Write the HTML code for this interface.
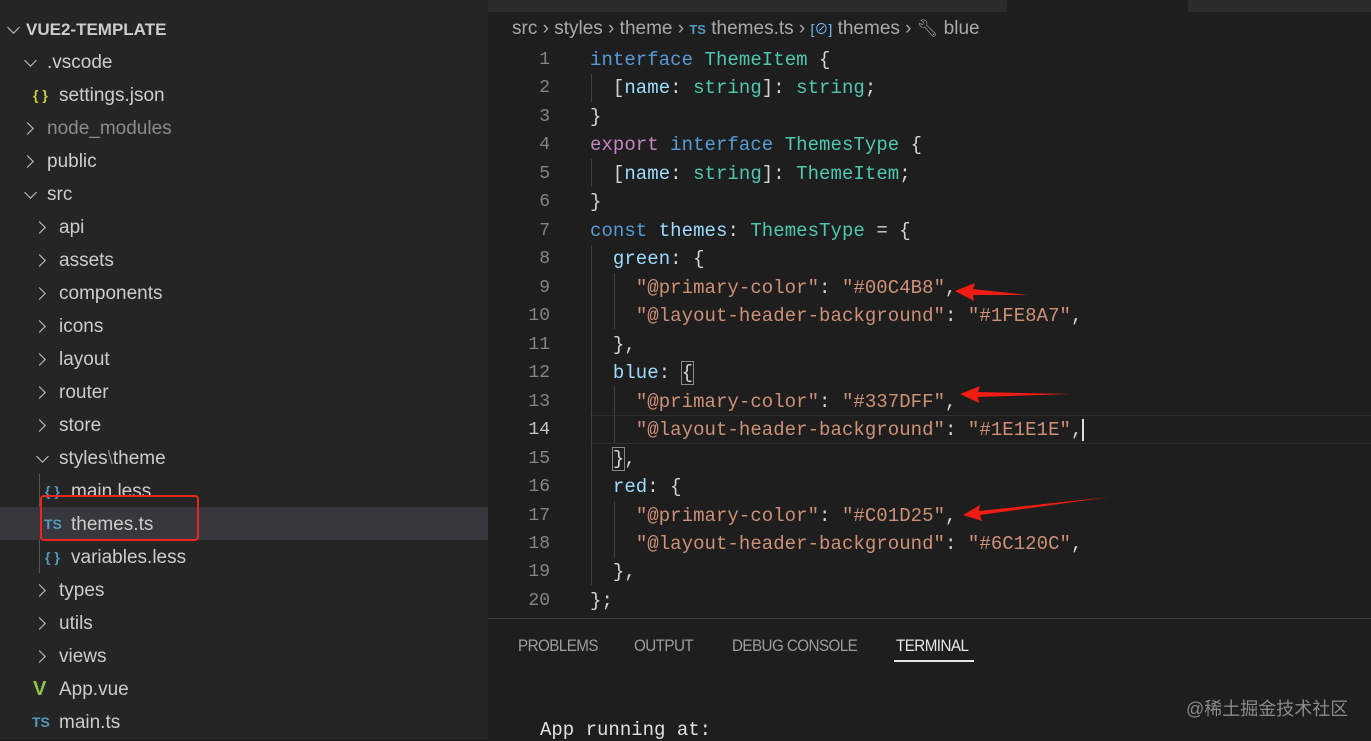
<!DOCTYPE html>
<html><head><meta charset="utf-8"><style>
*{margin:0;padding:0;box-sizing:border-box}
body{width:1371px;height:739px;overflow:hidden;background:#1e1e1e;position:relative;font-family:"Liberation Sans","Noto Sans CJK SC",sans-serif}
#side{position:absolute;left:0;top:0;width:488px;height:739px;background:#252526}
.r{position:absolute;left:0;width:488px;height:33px;line-height:33px;font-size:19px;color:#cccccc;white-space:nowrap}
.r span{position:absolute}
.chev{width:9px;height:9px;border-right:1.6px solid #c5c5c5;border-bottom:1.6px solid #c5c5c5;position:absolute}
.dn{transform:rotate(45deg);top:10px}
.rt{transform:rotate(-45deg);top:12px}
.ic{font-size:14px;font-weight:bold}
#ed{position:absolute;left:488px;top:0;width:883px;height:618px;background:#1e1e1e}
.ln{position:absolute;left:0;width:62px;text-align:right;font-family:"Liberation Mono",monospace;font-size:18px;color:#858585}
.cd{position:absolute;left:102px;font-family:"Liberation Mono",monospace;font-size:19px;color:#d4d4d4;white-space:pre;letter-spacing:0.05px}
.k{color:#569cd6}.t{color:#4ec9b0}.v{color:#9cdcfe}.e{color:#c586c0}.s{color:#ce9178}
.g{position:absolute;width:1px;background:#404040}
#panel{position:absolute;left:488px;top:618px;width:883px;height:121px;background:#1e1e1e;border-top:1px solid #3c3c3c}
.tab{position:absolute;top:18px;font-size:16.5px;color:#9d9d9d;letter-spacing:-0.6px;transform:scaleX(0.92);transform-origin:left}
</style></head><body>
<div id="side">
 <div class="r" style="top:13px"><i class="chev dn" style="left:9px"></i><span style="left:26px;font-weight:bold;font-size:17px;color:#cccccc">VUE2-TEMPLATE</span></div>
 <div class="r" style="top:46px"><i class="chev dn" style="left:26px"></i><span style="left:47px">.vscode</span></div>
 <div class="r" style="top:79px"><span class="ic" style="left:33px;color:#cbcb41">{ }</span><span style="left:59px">settings.json</span></div>
 <div class="r" style="top:112px"><i class="chev rt" style="left:23px"></i><span style="left:47px;color:#8b8b8b">node_modules</span></div>
 <div class="r" style="top:145px"><i class="chev rt" style="left:23px"></i><span style="left:47px">public</span></div>
 <div class="r" style="top:178px"><i class="chev dn" style="left:26px"></i><span style="left:47px">src</span></div>
 <div class="r" style="top:211px"><i class="chev rt" style="left:35px"></i><span style="left:59px">api</span></div>
 <div class="r" style="top:244px"><i class="chev rt" style="left:35px"></i><span style="left:59px">assets</span></div>
 <div class="r" style="top:277px"><i class="chev rt" style="left:35px"></i><span style="left:59px">components</span></div>
 <div class="r" style="top:310px"><i class="chev rt" style="left:35px"></i><span style="left:59px">icons</span></div>
 <div class="r" style="top:343px"><i class="chev rt" style="left:35px"></i><span style="left:59px">layout</span></div>
 <div class="r" style="top:376px"><i class="chev rt" style="left:35px"></i><span style="left:59px">router</span></div>
 <div class="r" style="top:409px"><i class="chev rt" style="left:35px"></i><span style="left:59px">store</span></div>
 <div class="r" style="top:442px"><i class="chev dn" style="left:38px"></i><span style="left:59px">styles<span style="position:static;color:#888">\</span>theme</span></div>
 <div style="position:absolute;left:39px;top:474px;width:1px;height:99px;background:#585858"></div>
 <div class="r" style="top:475px"><span class="ic" style="left:45px;color:#519aba">{ }</span><span style="left:71px">main.less</span></div>
 <div class="r" style="top:507px;background:#37373d;line-height:35px"><span class="ic" style="left:44px;color:#519aba">TS</span><span style="left:71px">themes.ts</span></div>
 <div class="r" style="top:541px"><span class="ic" style="left:45px;color:#519aba">{ }</span><span style="left:71px">variables.less</span></div>
 <div class="r" style="top:574px"><i class="chev rt" style="left:35px"></i><span style="left:59px">types</span></div>
 <div class="r" style="top:607px"><i class="chev rt" style="left:35px"></i><span style="left:59px">utils</span></div>
 <div class="r" style="top:640px"><i class="chev rt" style="left:35px"></i><span style="left:59px">views</span></div>
 <div class="r" style="top:673px"><span style="left:33px;color:#8dc149;font-size:20px;font-weight:bold">V</span><span style="left:59px">App.vue</span></div>
 <div class="r" style="top:706px"><span class="ic" style="left:32px;color:#519aba">TS</span><span style="left:59px">main.ts</span></div>
 <div style="position:absolute;left:40px;top:495px;width:159px;height:46px;border:2.5px solid #e8271f;border-radius:4px"></div>
</div>
<div id="ed">
 <div style="position:absolute;left:0;top:0;width:883px;height:12px;background:#2b2b2b"></div>
 <div style="position:absolute;left:519px;top:0;width:181px;height:12px;background:#1e1e1e"></div>
 <div style="position:absolute;left:24px;top:18px;font-size:19px;color:#a9a9a9;white-space:nowrap">src › styles › theme › <span style="color:#519aba;font-size:13px;font-weight:bold">TS</span> themes.ts › <span style="color:#75beff;font-size:14px">[⊘]</span> themes › <span style="font-size:17px">🔧︎</span> blue</div>
 <div style="position:absolute;left:102px;top:415px;width:781px;height:29px;border-top:1px solid #2f2f2f;border-bottom:1px solid #2f2f2f"></div>
 <div class="g" style="left:103px;top:74px;height:28px"></div>
 <div class="g" style="left:103px;top:159px;height:28px"></div>
 <div class="g" style="left:103px;top:245px;height:340px"></div>
 <div class="g" style="left:126px;top:273px;height:56px"></div>
 <div class="g" style="left:126px;top:387px;height:56px"></div>
 <div class="g" style="left:126px;top:501px;height:56px"></div>
 <div id="code"></div>
</div>
<div id="panel">
 <div class="tab" style="left:30px">PROBLEMS</div>
 <div class="tab" style="left:146px">OUTPUT</div>
 <div class="tab" style="left:244px">DEBUG CONSOLE</div>
 <div class="tab" style="left:408px;color:#e7e7e7">TERMINAL</div>
 <div style="position:absolute;left:406px;top:41px;width:80px;height:1.5px;background:#e7e7e7"></div>
 <div style="position:absolute;left:52px;top:100px;font-family:'Liberation Mono',monospace;font-size:19px;color:#e0e0e0">App running at:</div>
 <div style="position:absolute;left:698px;top:76px;font-size:18px;color:#8a8a8a">@稀土掘金技术社区</div>
</div>
<svg style="position:absolute;left:0;top:0" width="1371" height="739">
 <polygon points="955,291 975,283 973,289 1028,295 973,295 974,301" fill="#ee1c12"/>
 <polygon points="960,394 980,386 978,392 1070,394 978,397 979,403" fill="#ee1c12"/>
 <polygon points="963,515 980,505 979,511 1110,497 980,515 982,521" fill="#ee1c12"/>
</svg>
<script>
var L=[
'<span class="k">interface</span> <span class="t">ThemeItem</span> {',
'  [<span class="v">name</span>: <span class="t">string</span>]: <span class="t">string</span>;',
'}',
'<span class="e">export</span> <span class="k">interface</span> <span class="t">ThemesType</span> {',
'  [<span class="v">name</span>: <span class="t">string</span>]: <span class="t">ThemeItem</span>;',
'}',
'<span class="k">const</span> <span class="v">themes</span>: <span class="t">ThemesType</span> = {',
'  <span class="v">green</span>: {',
'    <span class="s">"@primary-color"</span>: <span class="s">"#00C4B8"</span>,',
'    <span class="s">"@layout-header-background"</span>: <span class="s">"#1FE8A7"</span>,',
'  },',
'  <span class="v">blue</span>: <span style="outline:1px solid #888">{</span>',
'    <span class="s">"@primary-color"</span>: <span class="s">"#337DFF"</span>,',
'    <span class="s">"@layout-header-background"</span>: <span class="s">"#1E1E1E"</span>,<span style="border-left:2px solid #ddd"></span>',
'  <span style="outline:1px solid #888">}</span>,',
'  <span class="v">red</span>: {',
'    <span class="s">"@primary-color"</span>: <span class="s">"#C01D25"</span>,',
'    <span class="s">"@layout-header-background"</span>: <span class="s">"#6C120C"</span>,',
'  },',
'};'];
var h='';
for(var i=0;i<20;i++){var y=59+i*28.47-10;
h+='<div class="ln" style="top:'+(y+1)+'px;'+(i==13?'color:#c6c6c6':'')+'">'+(i+1)+'</div>';
h+='<div class="cd" style="top:'+y+'px">'+L[i]+'</div>';}
document.getElementById('code').innerHTML=h;
</script>
</body></html>
